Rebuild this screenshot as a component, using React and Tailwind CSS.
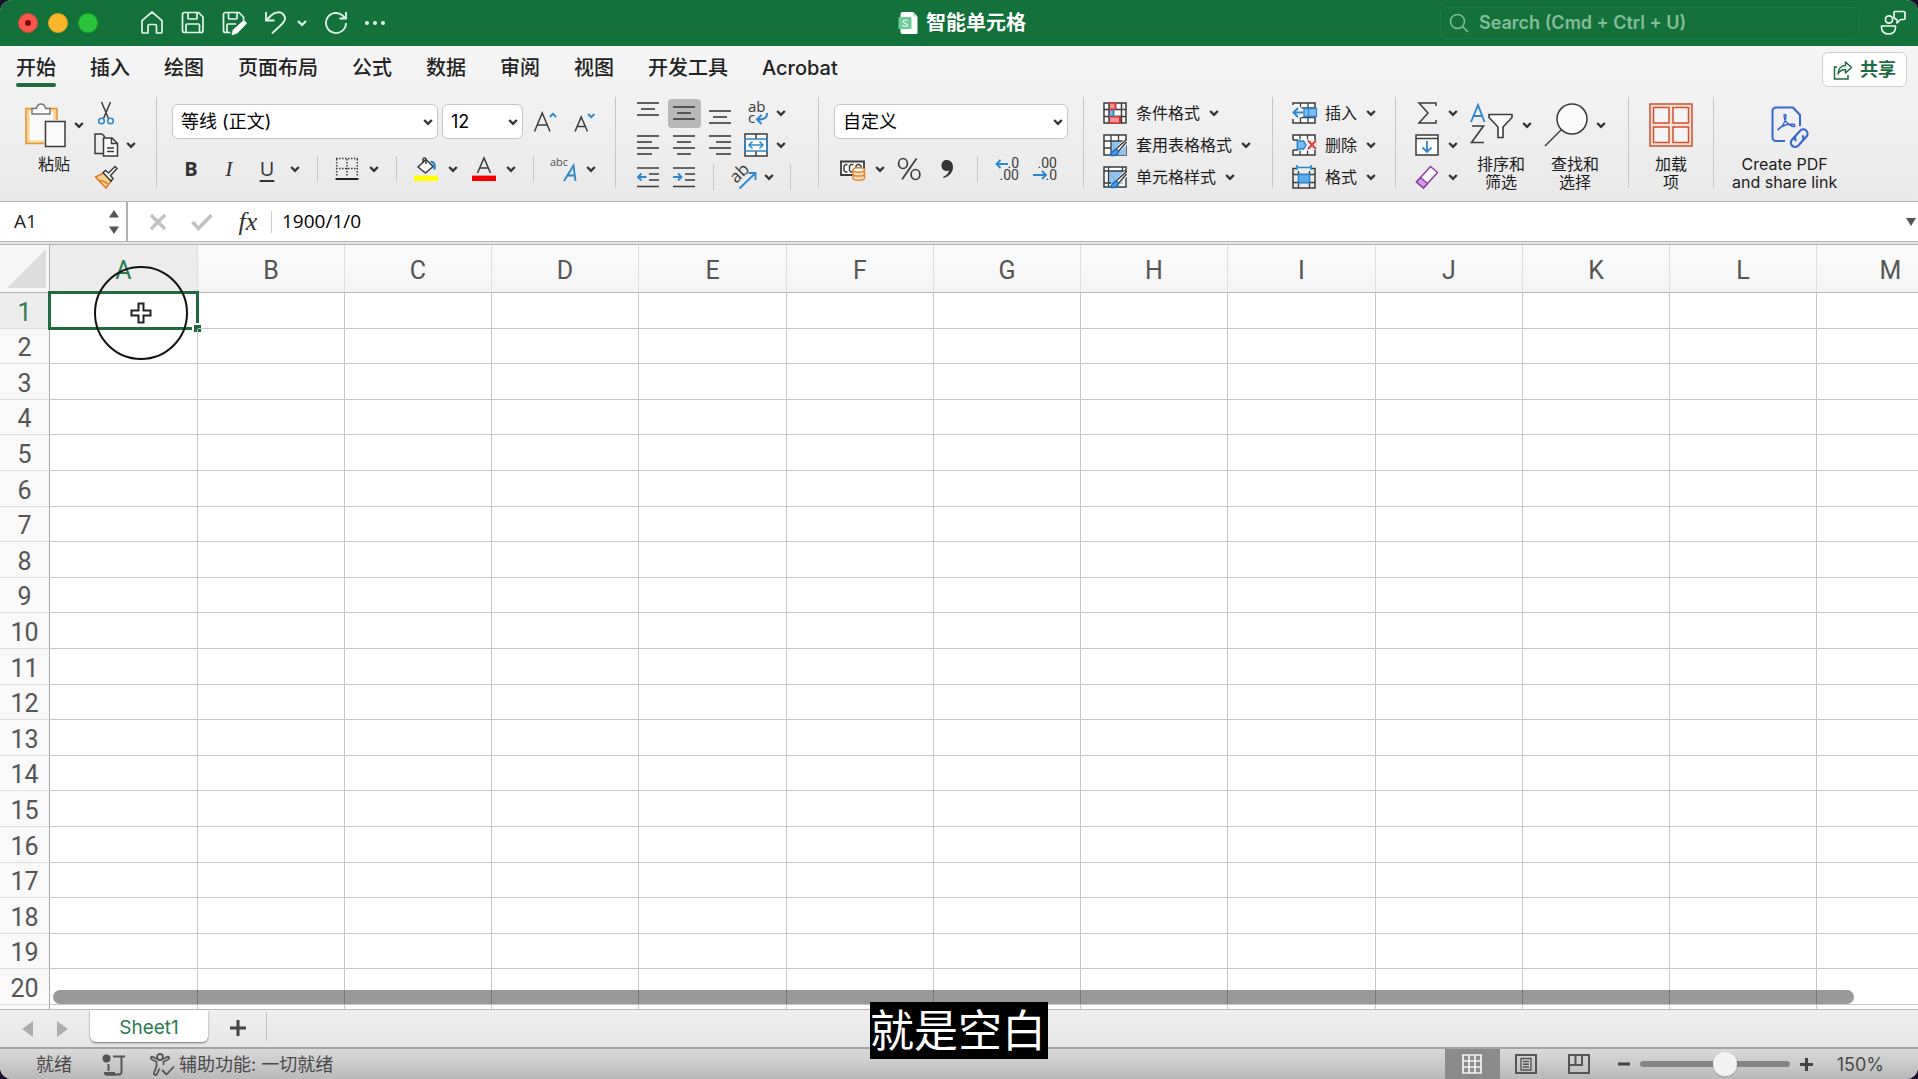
import { useState } from "react";
import clsx from "clsx";

const TABS = ["开始", "插入", "绘图", "页面布局", "公式", "数据", "审阅", "视图", "开发工具", "Acrobat"];
const COLUMNS = ["A", "B", "C", "D", "E", "F", "G", "H", "I", "J", "K", "L", "M"];
const ROWS = Array.from({ length: 20 }, (_, i) => i + 1);

const INK = "#3b3b3b";
const BLUE = "#2b88d0";

function Svg({ w = 24, h = 24, children, stroke = INK, sw = 1.5, className }) {
  return (
    <svg
      width={w}
      height={h}
      viewBox={`0 0 ${w} ${h}`}
      fill="none"
      stroke={stroke}
      strokeWidth={sw}
      className={clsx("shrink-0 overflow-visible", className)}
      aria-hidden="true"
    >
      {children}
    </svg>
  );
}

function Chevron({ className }) {
  return (
    <Svg w={10} h={6} stroke="#333" sw={2.4} className={className}>
      <path d="M1.2 1l3.8 3.8L8.8 1" />
    </Svg>
  );
}

/* ---------- title bar icons ---------- */

function HomeIcon() {
  return (
    <Svg stroke="#e6f5ea" sw={1.7}>
      <path d="M2 9.6L12 1l10 8.600V21a1 1 0 0 1-1 1h-4.500v-7a1.500 1.500 0 0 0-1.500-1.500H9.500A1.500 1.500 0 0 0 8 15v7H3a1 1 0 0 1-1-1z" strokeLinejoin="round" />
    </Svg>
  );
}

function SaveIcon() {
  return (
    <Svg stroke="#e6f5ea" sw={1.7}>
      <path d="M3.500 1.500h14L22 6v13.500a2 2 0 0 1-2 2H3.500a2 2 0 0 1-2-2v-16a2 2 0 0 1 2-2z" strokeLinejoin="round" />
      <path d="M7 1.500V7a1 1 0 0 0 1 1h7a1 1 0 0 0 1-1V1.500M5 21.500V14a1 1 0 0 1 1-1h11.500a1 1 0 0 1 1 1v7.500" />
    </Svg>
  );
}

function SaveEditIcon() {
  return (
    <Svg stroke="#e6f5ea" sw={1.7}>
      <path d="M8.500 21.500h-5a2 2 0 0 1-2-2v-16a2 2 0 0 1 2-2h13.500L21.500 6v3" strokeLinejoin="round" />
      <path d="M6.500 1.500V7a1 1 0 0 0 1 1H14a1 1 0 0 0 1-1V1.500M5 21.500V14a1 1 0 0 1 1-1h8" />
      <path d="M22 10l2 2.200-9.500 9.800-4 1.300 1-4z" fill="#fff" stroke="#fff" strokeLinejoin="round" />
    </Svg>
  );
}

function UndoIcon() {
  return (
    <Svg stroke="#e6f5ea" sw={1.8}>
      <path d="M3 1v8.500h8.500M3.500 9L8 4.500c4-4 9.500-4 12-1.500 3 3 2.500 6.500-1 10L9 22.500" />
    </Svg>
  );
}

function RedoIcon() {
  return (
    <Svg stroke="#e6f5ea" sw={1.8}>
      <path d="M22 12a10 10 0 1 1-3.500-7.600l3 3.100M22 1v6.500h-6.500" />
    </Svg>
  );
}

function PresenceIcon() {
  return (
    <Svg w={26} h={26} stroke="#f0faf3" sw={1.700}>
      <circle cx="9" cy="9.500" r="3.600" />
      <path d="M1.500 16h14v1.500c0 4-3 6.500-7 6.500s-7-2.500-7-6.500z" strokeLinejoin="round" />
      <path d="M15 1.500h8.500a1.500 1.500 0 0 1 1.500 1.500v5a1.500 1.500 0 0 1-1.500 1.500h-3L17 13V9.500c-2-.5-3-1.500-3-2.500V2.500a1 1 0 0 1 1-1z" strokeLinejoin="round" />
    </Svg>
  );
}

function DocIcon() {
  return (
    <Svg w={20} h={24} stroke="none">
      <path d="M4.500 1H15l4.500 4.500V22a1 1 0 0 1-1 1h-14a2 2 0 0 1-2-2V3a2 2 0 0 1 2-2z" fill="#fff" />
      <path d="M15 1l4.500 4.500H15z" fill="#b9e6cd" />
      <rect x="0.500" y="6" width="13" height="12" rx="1" fill="#6ccb9a" />
      <path d="M9.500 10c-.5-1-4.500-1.400-4.500.6S9.500 12 9.500 14 5 15.600 4.500 14" stroke="#d9f5e6" strokeWidth="1.300" />
    </Svg>
  );
}

/* ---------- clipboard ---------- */

function PasteIcon() {
  return (
    <Svg w={42} h={44}>
      <path d="M2 5.500h31v35H2z" fill="#fbd491" stroke="#e8913b" />
      <path d="M5.500 8.500h24v29h-24z" fill="#fafafa" stroke="none" />
      <path d="M8 11V5.500h4.500C13 2.500 15 1 17 1s4 1.500 4.500 4.500H26V11z" fill="#fff" stroke="#777" />
      <path d="M20 17h22v27H20z" fill="#eee" stroke="none" />
      <path d="M21.500 18.500H41v25H21.500z" fill="#fafafa" />
    </Svg>
  );
}

function CutIcon() {
  return (
    <Svg>
      <path d="M7.500 1l7 16.500M16.500 1l-7 16.500" />
      <circle cx="7.500" cy="20" r="2.800" stroke={BLUE} />
      <circle cx="16.500" cy="20" r="2.800" stroke={BLUE} />
    </Svg>
  );
}

function CopyIcon() {
  return (
    <Svg>
      <path d="M9 20.500H1V1h7l3 3" />
      <path d="M9.500 5H18l5.500 5.500V23h-14z" fill="#fafafa" />
      <path d="M17.500 5v5.500h6M13 15h7M13 18.500h7" />
    </Svg>
  );
}

function BrushIcon() {
  return (
    <Svg>
      <path d="M1.500 12l8.500-4 7.500 7.500-5.500 7.500z" fill="#fbd491" stroke="#e07b2a" />
      <path d="M5 15.500c3 0 6 1 8.500 3.500" stroke="#e07b2a" />
      <path d="M9 7.500l2.500-2 3 2.500L21 1.500l2 2-6.500 7 2.500 3-2 2.500z" fill="#fff" />
    </Svg>
  );
}

/* ---------- font group ---------- */

function GrowFontIcon() {
  return (
    <Svg>
      <path d="M1.500 21.500L9.200 3l7.800 18.500M4.500 15h9.500" />
      <path d="M16.800 7l3.200-3.200L23.200 7" stroke={BLUE} strokeWidth="1.800" />
    </Svg>
  );
}

function ShrinkFontIcon() {
  return (
    <Svg>
      <path d="M2 21.500L8.200 7l6.300 14.500M4.200 16.500h8" />
      <path d="M15 4l3.200 3.200L21.400 4" stroke={BLUE} strokeWidth="1.800" />
    </Svg>
  );
}

function BordersIcon() {
  return (
    <Svg>
      <path d="M1 1.500h22M1.700 2v18M12 2v18M22.300 2v18M1 11.500h22" strokeDasharray="1.500 1.500" />
      <path d="M0.500 22h23" strokeWidth="2" stroke="#222" />
    </Svg>
  );
}

function FillColorIcon() {
  return (
    <Svg>
      <path d="M4 10l8-7.500 7 7-7.500 6.500z" fill="#fff" />
      <path d="M9 6V2.500c0-2 3-2 3 0V7" />
      <path d="M16.500 5c3.500-.5 4.500 2 4 7.500" stroke={BLUE} strokeWidth="2.500" />
      <path d="M0 21.300h24" stroke="#ffff00" strokeWidth="5.400" />
    </Svg>
  );
}

function FontColorIcon() {
  return (
    <Svg>
      <path d="M5.500 16L12 1l6.500 15M8 11h8" />
      <path d="M0 21.300h24" stroke="#f50000" strokeWidth="5.400" />
    </Svg>
  );
}

function PhoneticIcon() {
  return (
    <Svg w={25} h={25} stroke="none">
      <text x="-1" y="9" fontSize="11" fill="#555" fontFamily="Open Sans, sans-serif">abc</text>
      <path d="M13 24L22.500 8.500 24.500 24M15.500 18.500h8.500" stroke={BLUE} strokeWidth="1.900" />
    </Svg>
  );
}

/* ---------- alignment ---------- */

function Lines({ rows }) {
  return (
    <Svg w={22} h={22} sw={1.600}>
      {rows.map(([x1, x2, y]) => (
        <path key={y} d={`M${x1} ${y}H${x2}`} />
      ))}
    </Svg>
  );
}

const ALIGN_TOP = [[0, 22, 1], [4, 18, 7], [0, 22, 13]];
const ALIGN_MIDDLE = [[0, 22, 5], [4, 18, 11], [0, 22, 17]];
const ALIGN_BOTTOM = [[0, 22, 9], [4, 18, 15], [0, 22, 21]];
const ALIGN_LEFT = [[0, 22, 2], [0, 15, 8], [0, 22, 14], [0, 15, 20]];
const ALIGN_CENTER = [[0, 22, 2], [4, 18, 8], [0, 22, 14], [4, 18, 20]];
const ALIGN_RIGHT = [[0, 22, 2], [7, 22, 8], [0, 22, 14], [7, 22, 20]];

function IndentIcon({ increase }) {
  return (
    <Svg w={22} h={22} sw={1.600}>
      <path d="M0 2h22M12 8h10M12 14h10M0 20.500h22" />
      <path d={increase ? "M0 11h8.500M5 7.500L8.500 11 5 14.500" : "M9.500 11H1M4.500 7.500L1 11l3.500 3.500"} stroke={BLUE} strokeWidth="1.800" />
    </Svg>
  );
}

function WrapIcon() {
  return (
    <Svg stroke="none">
      <text x="4" y="11" fontSize="15" fill={INK} fontFamily="Open Sans, sans-serif">ab</text>
      <text x="4" y="22" fontSize="15" fill={INK} fontFamily="Open Sans, sans-serif">c</text>
      <path d="M23 12c.5 5-3 6.500-9.500 6.500M17.500 14L13 18.500l4.500 4.500" stroke={BLUE} strokeWidth="2" />
    </Svg>
  );
}

function MergeIcon() {
  return (
    <Svg>
      <path d="M1 1h22v22H1z" fill="#fff" />
      <path d="M12 1v5M12 18v5" />
      <path d="M1 6h22v12H1zM5 12h14M8.500 8.500L5 12l3.500 3.500M15.500 8.500L19 12l-3.500 3.500" stroke={BLUE} />
    </Svg>
  );
}

function OrientationIcon() {
  return (
    <Svg w={25} h={25} stroke="none">
      <text x="4" y="18" fontSize="17" fill={INK} fontFamily="Open Sans, sans-serif" transform="rotate(-45 6 17)">ab</text>
      <path d="M8.500 23.500L24 8.500M17.500 8h7v7" stroke={BLUE} strokeWidth="1.800" />
    </Svg>
  );
}

/* ---------- number ---------- */

function CurrencyIcon() {
  return (
    <Svg w={25} h={24}>
      <path d="M1 4.500h23v13.500H1z" fill="#fff" strokeWidth="1.800" />
      <path d="M7.500 7.500h-2L4 9v4.500L5.500 15h2M13.500 7.500H11L9.500 9v4.500L11 15h2M16 11.500V9l1.500-1.500h1.500L21 9v2.500" />
      <path d="M13 13v8c0 3 11.500 3 11.500 0v-8z" fill="#fbe0c4" stroke="#e8842c" />
      <ellipse cx="18.700" cy="13" rx="5.700" ry="2.200" fill="#fff" stroke="#e8842c" />
      <path d="M13 17c0 2.800 11.500 2.800 11.500 0" stroke="#e8842c" />
    </Svg>
  );
}

function PercentIcon() {
  return (
    <Svg sw={1.700}>
      <path d="M19.500 1.500L5 22.500" />
      <ellipse cx="6" cy="6.500" rx="4.400" ry="5" />
      <ellipse cx="18.500" cy="17.500" rx="4.400" ry="5" />
    </Svg>
  );
}

function CommaIcon() {
  return (
    <Svg w={12} h={20} stroke="none">
      <path d="M5.500 1C9 1 12 3.500 12 8c0 5.500-4 9.500-9.500 11L2 18c3.500-1.500 5.500-3.500 6-6.500-4 1.500-7.500-1-7.500-5C.5 3 3 1 5.500 1z" fill="#333" />
    </Svg>
  );
}

function DecimalIcon({ increase }) {
  return (
    <Svg stroke="none">
      <text x="24" y="11" textAnchor="end" fontSize="14" fill={INK} fontFamily="Roboto, sans-serif">{increase ? ".0" : ".00"}</text>
      <text x="24" y="23" textAnchor="end" fontSize="14" fill={INK} fontFamily="Roboto, sans-serif">{increase ? ".00" : ".0"}</text>
      <path d={increase ? "M13 7H1.500M5.500 3l-4 4 4 4" : "M0 18h13M9 14l4 4-4 4"} stroke={BLUE} strokeWidth="1.800" />
    </Svg>
  );
}

/* ---------- styles and cells ---------- */

function CondFormatIcon() {
  return (
    <Svg>
      <path d="M1 2h22v20H1z" fill="#fff" />
      <path d="M6 2h6.500v6H6z" fill="#ff8f8f" stroke="none" />
      <path d="M6 15.500h11V22H6z" fill="#ff8f8f" stroke="none" />
      <path d="M6 8h5v7.500H6z" fill="#7cb8ea" stroke="none" />
      <path d="M1 8.500h22M1 15.500h22M6 2v20M18.500 2v20M12.500 2v6M17 15v7" />
      <path d="M6 2h6.500v6.500H6M6 15.500h11V22H6" stroke="#d63a3a" />
      <path d="M10.500 8.500v7" stroke={BLUE} strokeWidth="2" />
    </Svg>
  );
}

function TableFormatIcon({ cell }) {
  return (
    <Svg>
      <path d="M1 2h22v20H1z" fill="#fff" />
      <path d={cell ? "M5.500 6h14v13h-14z" : "M8 8h15v14H8z"} fill="#8cc3ef" stroke="none" />
      <path d={cell ? "M5.500 2v20M1 6h22M19.500 2v5M1 18h7" : "M8 2v20M15.500 2v6M1 8h22M1 15h7"} strokeWidth="1.300" />
      <path d="M23.500 8L14 17.500" stroke="#eef5fb" strokeWidth="6" />
      <path d="M23.500 6.500L13 16l2.500 2.500L23.500 9" fill="#fff" />
      <path d="M13 16c-3 .5-3 4-6.500 6 4 1 8 .5 9-3.500z" fill="#4a9be0" stroke="#1f6fb8" />
    </Svg>
  );
}

function InsertCellsIcon() {
  return (
    <Svg>
      <path d="M1 2h22v20H1z" fill="#fff" />
      <path d="M8.500 2v20M16 2v20M1 16.500h22M1 7h22" strokeWidth="1.300" />
      <path d="M0 4h5l5 3v9l-5 2H0z" fill="#f3f3f3" stroke="none" />
      <path d="M12 7.500h12.500v8H12z" fill="#7bbcf2" stroke={BLUE} strokeWidth="1.300" />
      <path d="M16.500 7.500v8" stroke={BLUE} strokeWidth="1.300" />
      <path d="M11.500 11.500H1.500M6 7l-4.500 4.500L6 16" stroke={BLUE} strokeWidth="2" />
    </Svg>
  );
}

function DeleteCellsIcon() {
  return (
    <Svg>
      <path d="M1 7V2h22v5M1 17v5h22v-5" fill="#fff" />
      <path d="M8 2v4.500M15.500 2v4.500M8 17.500V22M15.500 17.500V22M1 7h4.500v10H1" strokeWidth="1.300" />
      <path d="M5.500 8h6l2.500 4-2.500 4h-6z" fill="#7bbcf2" stroke={BLUE} />
      <path d="M16 7.500l8 8.500M24 7.500L16 16" stroke="#e03c3c" strokeWidth="1.900" />
    </Svg>
  );
}

function FormatCellsIcon() {
  return (
    <Svg>
      <path d="M4 3.500H1V23h22V3.500h-3" />
      <path d="M6.500 6v17M17.500 6v17M1 9.500h22M1 17.500h22" strokeWidth="1.300" />
      <path d="M6.500 9.500h11v8h-11z" fill="#5aaef0" stroke={BLUE} />
      <path d="M5 0v5M19 0v5M5 2.500h14" stroke={BLUE} strokeWidth="1.700" />
    </Svg>
  );
}

/* ---------- editing ---------- */

function SumIcon() {
  return (
    <Svg>
      <path d="M21 5V2H4l9 10-9 10h17v-3" />
    </Svg>
  );
}

function FillDownIcon() {
  return (
    <Svg>
      <path d="M1 2h22v20H1z" fill="#fff" />
      <path d="M1 5.500h22" />
      <path d="M12 8v11M7.500 14.500L12 19l4.500-4.500" stroke={BLUE} strokeWidth="1.800" />
    </Svg>
  );
}

function EraserIcon() {
  return (
    <Svg>
      <path d="M15.500 1.500l7 6L8.500 23 1.500 17z" fill="#fff" stroke="#8f3fa3" sw={1.800} />
      <path d="M5.500 12.500l7 6L8.500 23l-7-6z" fill="#d79be6" stroke="#8f3fa3" />
    </Svg>
  );
}

function SortFilterIcon() {
  return (
    <Svg w={44} h={44} sw={1.600}>
      <path d="M1 19L8 2l6.500 17M3.500 13h8.700" stroke={BLUE} strokeWidth="1.900" />
      <path d="M2 23h11.500L1.500 39.500H14" />
      <path d="M19 11.500h23v3l-9 9.500v10.500h-5V24l-9-9.500z" fill="#fff" />
    </Svg>
  );
}

function FindIcon() {
  return (
    <Svg w={44} h={44}>
      <circle cx="28" cy="16" r="15" fill="#fafafa" />
      <path d="M17 27L1 43" />
    </Svg>
  );
}

function AddInsIcon() {
  return (
    <Svg w={44} h={44} stroke="#d2502c">
      <path d="M1 1h42v42H1z" fill="#fbe3db" />
      <path d="M4.500 4.500h15.500v15.500H4.500zM24 4.500h15.500v15.500H24zM4.500 24h15.500v15.500H4.500zM24 24h15.500v15.500H24z" fill="#f5f5f5" />
    </Svg>
  );
}

function PdfLinkIcon() {
  return (
    <Svg w={52} h={44} stroke="#3567d6" sw={2}>
      <path d="M26 38H17a3.500 3.500 0 0 1-3.500-3.500V8A3.500 3.500 0 0 1 17 4.500h17l7 7.500V23" strokeLinejoin="round" />
      <path d="M18.500 27c4-1.500 8.500-8.500 8.500-14 0-2-2-2-2 0 0 4.500 4.500 9.500 9 10.500 2.500.5 2.500-2 0-2.200-5.500-.3-11.500 1.200-15.500 5.700z" strokeWidth="1.400" />
      <g transform="rotate(-48 40 35)" strokeWidth="2.200">
        <path d="M38 31h-4a4.300 4.300 0 0 0 0 8.600h6a4.300 4.300 0 0 0 4-3" strokeLinecap="round" />
        <path d="M42 39.600h4a4.300 4.300 0 0 0 0-8.600h-6a4.300 4.300 0 0 0-4 3" strokeLinecap="round" />
      </g>
    </Svg>
  );
}

/* ---------- building blocks ---------- */

function GroupDivider() {
  return <div className="h-[91px] w-px shrink-0 bg-[#c8c8c8]" />;
}

function SmallDivider({ className }) {
  return <div className={clsx("h-[26px] w-px shrink-0 bg-[#c8c8c8]", className)} />;
}

function IconButton({ label, className, children }) {
  return (
    <button type="button" aria-label={label} className={clsx("flex shrink-0 items-center justify-center", className)}>
      {children}
    </button>
  );
}

function LineButton({ icon, text, label }) {
  return (
    <button type="button" aria-label={text || label} className="flex h-8 items-center gap-[9px] text-base leading-5 whitespace-nowrap">
      {icon}
      {text && <span>{text}</span>}
      <Chevron />
    </button>
  );
}

function BigButton({ icon, lines, menu, className }) {
  return (
    <button type="button" className={clsx("flex flex-col items-center pt-1.5 text-base leading-[18px] whitespace-nowrap", className)}>
      <span className="flex items-center gap-2">
        {icon}
        {menu && <Chevron />}
      </span>
      <span className="mt-2">
        {lines.map((line) => (
          <span key={line} className="block">{line}</span>
        ))}
      </span>
    </button>
  );
}

function SelectBox({ label, value, className }) {
  return (
    <div className={clsx("relative shrink-0", className)}>
      <select
        aria-label={label}
        defaultValue={value}
        className="h-[35px] w-full appearance-none rounded-md border border-[#c6c6c6] bg-white px-2 text-lg leading-6 text-black"
      >
        <option>{value}</option>
      </select>
      <Chevron className="pointer-events-none absolute top-[15px] right-[5px]" />
    </div>
  );
}

function TitleBar() {
  return (
    <header className="flex h-[46px] items-center bg-[#12723a] text-white">
      <div className="flex flex-1 items-center pl-[18px]">
        <div className="flex gap-2.5">
          <button type="button" aria-label="Close" className="flex size-5 items-center justify-center rounded-full border border-[#d0463c] bg-[#f9564d]">
            <span className="size-1.5 rounded-full bg-[#7a0c05]" />
          </button>
          <button type="button" aria-label="Minimize" className="size-5 rounded-full border border-[#dea123] bg-[#fdb52a]" />
          <button type="button" aria-label="Zoom" className="size-5 rounded-full border border-[#1fa82b] bg-[#29c63b]" />
        </div>
        <div className="ml-[42px] flex items-center gap-[17px]">
          <IconButton label="Home"><HomeIcon /></IconButton>
          <IconButton label="Save"><SaveIcon /></IconButton>
          <IconButton label="Save as"><SaveEditIcon /></IconButton>
          <IconButton label="Undo" className="gap-2.5">
            <UndoIcon />
            <Svg w={10} h={6} stroke="#e6f5ea" sw={2.200}>
              <path d="M1 1l4 4 4-4" />
            </Svg>
          </IconButton>
          <IconButton label="Repeat"><RedoIcon /></IconButton>
          <IconButton label="More" className="gap-1">
            <span className="size-1 rounded-full bg-[#e6f5ea]" />
            <span className="size-1 rounded-full bg-[#e6f5ea]" />
            <span className="size-1 rounded-full bg-[#e6f5ea]" />
          </IconButton>
        </div>
      </div>
      <div className="flex items-center gap-2">
        <DocIcon />
        <h1 className="text-xl leading-6 font-bold">智能单元格</h1>
      </div>
      <div className="flex flex-1 items-center justify-end gap-5 pr-3">
        <label className="flex h-8 w-[420px] items-center gap-2.5 rounded-md border border-[#1c7b44] px-2 text-[#86bd99]">
          <Svg w={20} h={20} stroke="#86bd99">
            <circle cx="8.500" cy="8.500" r="7" />
            <path d="M13.500 13.500L19 19" />
          </Svg>
          <input
            type="search"
            aria-label="Search"
            placeholder="Search (Cmd + Ctrl + U)"
            className="w-full bg-transparent text-lg leading-6 font-semibold outline-none placeholder:text-[#86bd99]"
          />
        </label>
        <IconButton label="Presence"><PresenceIcon /></IconButton>
      </div>
    </header>
  );
}

function RibbonTabs({ active, onSelect }) {
  return (
    <div className="flex h-[51px] items-start justify-between pr-[11px] pl-4">
      <nav className="flex gap-[34px]">
        {TABS.map((tab) => (
          <button
            key={tab}
            type="button"
            onClick={() => onSelect(tab)}
            className="flex flex-col pt-[9px] text-xl leading-[26px] font-medium whitespace-nowrap text-[#222]"
          >
            {tab}
            <span className={clsx("mt-0.5 h-1 w-full rounded-full", active === tab && "bg-[#1d6b3f]")} />
          </button>
        ))}
      </nav>
      <button
        type="button"
        className="mt-1.5 flex h-[35px] items-center gap-2 rounded-md border border-[#cfcfcf] bg-white px-2.5 text-lg leading-6 font-bold text-[#1d6b3f]"
      >
        <Svg w={19} h={20} stroke="#1d6b3f">
          <path d="M4 7H1.500v12H15v-4" />
          <path d="M12.500 2l6 5.500-6 5.500V9.500c-4 0-6 1.500-7.500 4.500 0-5 3-8.500 7.500-8.500z" strokeLinejoin="round" />
        </Svg>
        共享
      </button>
    </div>
  );
}

function Ribbon() {
  return (
    <div className="flex items-start pb-2 text-[#1c1c1c]">
      <div className="flex shrink-0 gap-2.5 pr-5 pl-6">
        <BigButton icon={<PasteIcon />} lines={["粘贴"]} menu />
        <div className="flex flex-col">
          <IconButton label="剪切" className="h-8 w-6"><CutIcon /></IconButton>
          <IconButton label="复制" className="h-8 gap-2"><CopyIcon /><Chevron /></IconButton>
          <IconButton label="格式刷" className="h-8 w-6"><BrushIcon /></IconButton>
        </div>
      </div>
      <GroupDivider />

      <div className="shrink-0 pt-[7px] pr-[18px] pl-[15px]">
        <div className="flex items-center">
          <SelectBox label="字体" value="等线 (正文)" className="w-[266px]" />
          <SelectBox label="字号" value="12" className="ml-1 w-[81px]" />
          <IconButton label="增大字号" className="ml-2.5"><GrowFontIcon /></IconButton>
          <IconButton label="减小字号" className="ml-4"><ShrinkFontIcon /></IconButton>
        </div>
        <div className="mt-3.5 flex h-8 items-center">
          <IconButton label="加粗" className="w-[38px] font-['Open_Sans',sans-serif] text-xl leading-6 font-bold text-[#333]">B</IconButton>
          <IconButton label="倾斜" className="w-[38px] font-['Liberation_Serif',serif] text-[22px] leading-6 italic text-[#333]">I</IconButton>
          <IconButton label="下划线" className="w-[38px] font-['Open_Sans',sans-serif] text-xl leading-6 text-[#333] underline underline-offset-4">U</IconButton>
          <IconButton label="下划线选项" className="ml-1"><Chevron /></IconButton>
          <SmallDivider className="mx-[17px]" />
          <IconButton label="边框" className="gap-2.5"><BordersIcon /><Chevron /></IconButton>
          <SmallDivider className="mx-[17px]" />
          <IconButton label="填充颜色" className="gap-2.5"><FillColorIcon /><Chevron /></IconButton>
          <IconButton label="字体颜色" className="ml-3.5 gap-2.5"><FontColorIcon /><Chevron /></IconButton>
          <SmallDivider className="mx-[17px]" />
          <IconButton label="拼音" className="gap-2.5"><PhoneticIcon /><Chevron /></IconButton>
        </div>
      </div>
      <GroupDivider />

      <div className="w-[202px] shrink-0 pl-3.5">
        <div className="flex h-8 items-center">
          <IconButton label="顶端对齐" className="h-8 w-9"><Lines rows={ALIGN_TOP} /></IconButton>
          <IconButton label="垂直居中" className="h-8 w-9">
            <span className="flex h-[29px] w-[33px] items-center justify-center rounded bg-[#b9b9b9]">
              <Lines rows={ALIGN_MIDDLE} />
            </span>
          </IconButton>
          <IconButton label="底端对齐" className="h-8 w-9"><Lines rows={ALIGN_BOTTOM} /></IconButton>
          <IconButton label="自动换行" className="ml-1.5 gap-2"><WrapIcon /><Chevron /></IconButton>
        </div>
        <div className="flex h-8 items-center">
          <IconButton label="左对齐" className="h-8 w-9"><Lines rows={ALIGN_LEFT} /></IconButton>
          <IconButton label="居中" className="h-8 w-9"><Lines rows={ALIGN_CENTER} /></IconButton>
          <IconButton label="右对齐" className="h-8 w-9"><Lines rows={ALIGN_RIGHT} /></IconButton>
          <IconButton label="合并后居中" className="ml-1.5 gap-2"><MergeIcon /><Chevron /></IconButton>
        </div>
        <div className="flex h-8 items-center">
          <IconButton label="减少缩进" className="h-8 w-9"><IndentIcon /></IconButton>
          <IconButton label="增加缩进" className="h-8 w-9"><IndentIcon increase /></IconButton>
          <SmallDivider className="mr-[17px] ml-[11px]" />
          <IconButton label="方向" className="gap-2"><OrientationIcon /><Chevron /></IconButton>
          <SmallDivider className="ml-4" />
        </div>
      </div>
      <GroupDivider />

      <div className="shrink-0 px-[15px] pt-[7px]">
        <SelectBox label="数字格式" value="自定义" className="w-[234px]" />
        <div className="mt-3.5 flex h-8 items-center pl-1.5">
          <IconButton label="会计数字格式" className="gap-2.5"><CurrencyIcon /><Chevron /></IconButton>
          <IconButton label="百分比样式" className="ml-3"><PercentIcon /></IconButton>
          <IconButton label="千位分隔样式" className="ml-5"><CommaIcon /></IconButton>
          <SmallDivider className="mr-[17px] ml-6" />
          <IconButton label="增加小数位数"><DecimalIcon increase /></IconButton>
          <IconButton label="减少小数位数" className="ml-3.5"><DecimalIcon /></IconButton>
        </div>
      </div>
      <GroupDivider />

      <div className="w-[188px] shrink-0 pl-[19px]">
        <LineButton icon={<CondFormatIcon />} text="条件格式" />
        <LineButton icon={<TableFormatIcon />} text="套用表格格式" />
        <LineButton icon={<TableFormatIcon cell />} text="单元格样式" />
      </div>
      <GroupDivider />

      <div className="shrink-0 px-[19px]">
        <LineButton icon={<InsertCellsIcon />} text="插入" />
        <LineButton icon={<DeleteCellsIcon />} text="删除" />
        <LineButton icon={<FormatCellsIcon />} text="格式" />
      </div>
      <GroupDivider />

      <div className="flex shrink-0 gap-3 pr-[22px] pl-[19px]">
        <div>
          <LineButton icon={<SumIcon />} label="自动求和" />
          <LineButton icon={<FillDownIcon />} label="填充" />
          <LineButton icon={<EraserIcon />} label="清除" />
        </div>
        <BigButton icon={<SortFilterIcon />} lines={["排序和", "筛选"]} menu />
        <BigButton icon={<FindIcon />} lines={["查找和", "选择"]} menu />
      </div>
      <GroupDivider />

      <BigButton icon={<AddInsIcon />} lines={["加载", "项"]} className="mx-5" />
      <GroupDivider />

      <BigButton icon={<PdfLinkIcon />} lines={["Create PDF", "and share link"]} className="mx-[18px]" />
    </div>
  );
}

function FormulaBar() {
  return (
    <div className="flex h-10 items-center border-t border-[#b4b4b4] bg-white">
      <div className="flex h-full w-32 items-center justify-between border-r-2 border-[#b0b0b0] pr-[7px] pl-3.5">
        <input
          aria-label="名称框"
          defaultValue="A1"
          className="w-20 pb-0.5 font-['Open_Sans',sans-serif] text-[19px] leading-6 text-[#222] outline-none"
        />
        <Svg w={10} h={26} stroke="none">
          <path d="M0 8.500L5 1l5 7.500zM0 17.500h10L5 25z" fill="#555" />
        </Svg>
      </div>
      <IconButton label="取消" className="ml-[21px]">
        <Svg w={18} h={18} stroke="#c2c2c2" sw={3.400}>
          <path d="M2 2l14 14M16 2L2 16" />
        </Svg>
      </IconButton>
      <IconButton label="输入" className="ml-6">
        <Svg w={22} h={18} stroke="#c2c2c2" sw={3.600}>
          <path d="M1.500 9l6 6.500L20.500 2" />
        </Svg>
      </IconButton>
      <IconButton label="插入函数" className="ml-[22px] w-[26px] font-['Liberation_Serif',serif] text-[26px] leading-8 italic text-[#333]">fx</IconButton>
      <div className="ml-2.5 h-[22px] w-px bg-[#d0d0d0]" />
      <input
        aria-label="编辑栏"
        defaultValue="1900/1/0"
        className="ml-2.5 min-w-0 flex-1 pb-0.5 font-['Open_Sans',sans-serif] text-[19px] leading-6 text-black outline-none"
      />
      <IconButton label="展开编辑栏" className="mr-0.5">
        <Svg w={10} h={8} stroke="none">
          <path d="M0 0h10L5 8z" fill="#555" />
        </Svg>
      </IconButton>
    </div>
  );
}

function Grid() {
  return (
    <main className="relative min-h-0 flex-1 overflow-hidden bg-white">
      <table className="w-px table-fixed border-separate border-spacing-0 font-['Roboto',sans-serif] text-[25px] leading-[30px] text-[#555]">
        <colgroup>
          <col className="w-[50px]" />
          {COLUMNS.map((col) => (
            <col key={col} className="w-[147px] nth-[4n+2]:w-[148px]" />
          ))}
        </colgroup>
        <thead>
          <tr className="h-12">
            <th className="border-r border-b border-[#b5b5b5] bg-[#f7f7f7] p-0">
              <Svg w={40} h={40} stroke="none" className="ml-[7px]">
                <path d="M39 0v39H0z" fill="#dcdcdc" />
              </Svg>
            </th>
            {COLUMNS.map((col) => (
              <th
                key={col}
                scope="col"
                className={clsx(
                  "border-r border-b border-[#b5b5b5] border-r-[#dedede] p-0 pt-1 font-normal",
                  col === "A" ? "bg-[#ececec] text-[#2a7d4f]" : "bg-linear-to-b from-[#fcfcfc] to-[#f4f4f4]"
                )}
              >
                {col}
              </th>
            ))}
          </tr>
        </thead>
        <tbody>
          {ROWS.map((row) => (
            <tr key={row} className="h-9 nth-[5n+2]:h-[35px] nth-[5n+4]:h-[35px]">
              <th
                scope="row"
                className={clsx(
                  "border-r border-b border-[#dedede] border-r-[#a8a8a8] p-0 pt-1 font-normal",
                  row === 1 ? "bg-[#ececec] text-[#2a7d4f]" : "bg-[#f9f9f9]"
                )}
              >
                {row}
              </th>
              {COLUMNS.map((col) => (
                <td key={col} className="relative border-r border-b border-[#c6c6c6] p-0">
                  {row === 1 && col === "A" && (
                    <div className="absolute -inset-x-0.5 -inset-y-0.5 border-[3px] border-[#1d6b3f]">
                      <span className="absolute -right-[5px] -bottom-[5px] size-[9px] border-t-2 border-l-2 border-white bg-[#1d6b3f]" />
                    </div>
                  )}
                </td>
              ))}
            </tr>
          ))}
          <tr className="h-9">
            <th className="border-r border-[#a8a8a8] bg-[#f9f9f9] p-0" />
            {COLUMNS.map((col) => (
              <td key={col} className="border-r border-[#c6c6c6] p-0" />
            ))}
          </tr>
        </tbody>
      </table>

      {/* pointer with click ring */}
      <Svg w={94} h={94} className="pointer-events-none absolute top-[21px] left-[94px]">
        <circle cx="47" cy="47" r="46" stroke="#111" strokeWidth="2" />
        <path d="M44.500 37.500h5v7h7v5h-7v7h-5v-7h-7v-5h7z" fill="#fff" stroke="#222" strokeWidth="2" />
      </Svg>

      <div className="absolute right-16 bottom-[5px] left-[53px] h-3.5 rounded-full bg-black/40" />
    </main>
  );
}

function SheetTabs() {
  return (
    <div className="flex h-[38px] items-start border-t border-[#b8b8b8] bg-linear-to-b from-[#efefef] to-[#e6e6e6]">
      <div className="flex h-9 items-center gap-6 pt-0.5 pl-[22px]">
        <IconButton label="上一张">
          <Svg w={11} h={16} stroke="none"><path d="M11 0v16L0 8z" fill="#adadad" /></Svg>
        </IconButton>
        <IconButton label="下一张">
          <Svg w={11} h={16} stroke="none"><path d="M0 0v16l11-8z" fill="#adadad" /></Svg>
        </IconButton>
      </div>
      <button
        type="button"
        className="ml-[22px] h-8 w-[118px] rounded-b-md bg-white pt-[3px] text-[19px] leading-6 text-[#2a7d4f] shadow-[0_1px_2px_rgba(0,0,0,0.5)]"
      >
        Sheet1
      </button>
      <IconButton label="新建工作表" className="mt-2.5 ml-[22px]">
        <Svg w={16} h={16} stroke="#444" sw={3}><path d="M8 0v16M0 8h16" /></Svg>
      </IconButton>
      <div className="mt-0.5 ml-5 h-[29px] w-px bg-[#c0c0c0]" />
    </div>
  );
}

function StatusBar() {
  const [zoom, setZoom] = useState(58);

  return (
    <footer className="flex h-8 items-center justify-between border-t-2 border-[#a3a3a3] bg-linear-to-b from-[#dadada] to-[#b9b9b9] text-lg leading-6 text-[#4a4a4a]">
      <div className="flex items-center pt-0.5 pl-9">
        <span>就绪</span>
        <IconButton label="录制宏" className="ml-[30px]">
          <Svg w={24} h={22} stroke="#555" sw={2}>
            <circle cx="4.500" cy="4.500" r="4" fill="#555" stroke="none" />
            <path d="M11 2.500h12M19.500 2.500v15c0 1.500-1 3-2.500 3H4M6.500 10v7" />
            <path d="M2 18h11c0 2 1 3.500 2.500 3.500H4C2.500 21.500 2 20 2 18z" fill="#555" stroke="none" />
          </Svg>
        </IconButton>
        <button type="button" className="ml-6 flex items-center gap-1 whitespace-nowrap">
          <Svg w={25} h={24} stroke="#555" sw={1.800}>
            <circle cx="10" cy="4" r="3" />
            <path d="M7 6L3 4c-2-.8-3 1.500-1 2.500l4.500 2.200V13L4 20c-.5 2 2 3 3 1l2.500-5.500M13 6l4-2c2-.8 3 1.500 1 2.500l-4.500 2.200V12M12 17l4.500 4.500 7.500-8" />
          </Svg>
          <span>辅助功能: 一切就绪</span>
        </button>
      </div>
      <div className="flex h-full items-center pr-[34px]">
        <IconButton label="普通视图" className="h-full w-[55px] bg-[#8b8b8b]">
          <Svg w={20} h={20} stroke="#f2f2f2" sw={1.700}>
            <path d="M1 1h18v18H1zM7 1v18M13 1v18M1 7h18M1 13h18" />
          </Svg>
        </IconButton>
        <IconButton label="页面布局视图" className="h-full w-[53px]">
          <Svg w={22} h={20} stroke="#555" sw={2}>
            <path d="M1 1h20v18H1z" />
            <path d="M6 4.500h10v11.500H6zM8 7.500h6M8 10.200h6M8 13h6" strokeWidth="1.400" />
          </Svg>
        </IconButton>
        <IconButton label="分页预览" className="h-full w-[53px]">
          <Svg w={22} h={20} stroke="#555" sw={2}>
            <path d="M1 1h20v18H1zM1 11h13V1M7.500 1v10" />
          </Svg>
        </IconButton>
        <IconButton label="缩小" className="ml-3">
          <Svg w={12} h={12} stroke="#444" sw={3}><path d="M0 6h12" /></Svg>
        </IconButton>
        <input
          type="range"
          aria-label="缩放"
          min="0"
          max="100"
          value={zoom}
          onChange={(e) => setZoom(Number(e.target.value))}
          className="mx-2.5 h-6 w-[150px] appearance-none bg-transparent [&::-webkit-slider-runnable-track]:h-1.5 [&::-webkit-slider-runnable-track]:rounded-full [&::-webkit-slider-runnable-track]:bg-[#858585] [&::-webkit-slider-thumb]:-mt-[9px] [&::-webkit-slider-thumb]:size-6 [&::-webkit-slider-thumb]:appearance-none [&::-webkit-slider-thumb]:rounded-full [&::-webkit-slider-thumb]:bg-[#f3f3f3] [&::-webkit-slider-thumb]:shadow"
        />
        <IconButton label="放大">
          <Svg w={13} h={13} stroke="#444" sw={3}><path d="M6.500 0v13M0 6.500h13" /></Svg>
        </IconButton>
        <span className="ml-6 pt-0.5">150%</span>
      </div>
    </footer>
  );
}

export default function App() {
  const [activeTab, setActiveTab] = useState("开始");

  return (
    <div className="h-screen bg-[#1b1030]">
      <div className="relative flex h-full flex-col overflow-hidden rounded-xl bg-[#ececec] font-['Inter','Noto_Sans_CJK_SC',sans-serif]">
        <TitleBar />
        <section className="bg-linear-to-b from-[#f6f6f6] to-[#e9e9e9]">
          <RibbonTabs active={activeTab} onSelect={setActiveTab} />
          <Ribbon />
        </section>
        <FormulaBar />
        <div className="h-1 shrink-0 border-y border-[#b4b4b4] bg-[#e4e4e4]" />
        <Grid />
        <SheetTabs />
        <StatusBar />
        <p className="absolute bottom-5 left-1/2 -translate-x-1/2 bg-black pr-0.5 pb-1 font-['Noto_Sans_CJK_SC',sans-serif] text-[44px] leading-[53px] whitespace-nowrap text-white">
          就是空白
        </p>
      </div>
    </div>
  );
}
